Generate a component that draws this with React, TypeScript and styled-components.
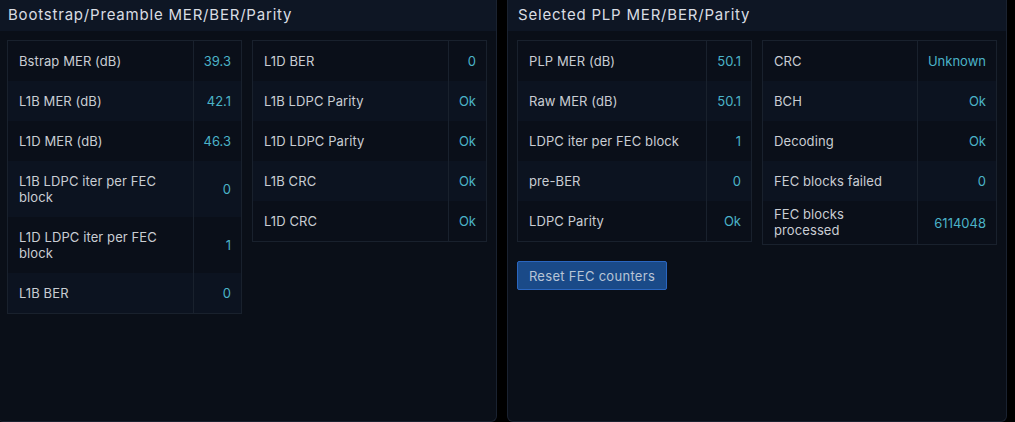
import React from "react";
import styled, { createGlobalStyle } from "styled-components";

const Global = createGlobalStyle`
  html, body { margin: 0; padding: 0; background: #000; }
  body { font-family: Inter, "Noto Sans", sans-serif; overflow: hidden; }
`;

const Page = styled.div`
  display: grid;
  grid-template-columns: 500px 500px;
  gap: 10px;
  margin-left: -3px;
  height: 422px;
`;

const Panel = styled.section`
  box-sizing: border-box;
  height: 422px;
  background: #0a0f18;
  border: 1px solid #1a2230;
  border-top: none;
  border-radius: 0 0 6px 6px;
  display: flex;
  flex-direction: column;
`;

const Header = styled.div`
  box-sizing: border-box;
  height: 31px;
  background: #0e1624;
  padding: 0 10px;
  display: flex;
  align-items: center;
  color: #d9dde3;
  font-size: 15px;
  letter-spacing: 0.8px;
  padding-bottom: 3px;
`;

const Body = styled.div`
  padding: 9px 9px;
  display: flex;
  flex-direction: column;
  gap: 16px;
`;

const Tables = styled.div`
  display: grid;
  grid-template-columns: 235px 235px;
  gap: 10px;
  align-items: start;
`;

const Table = styled.table`
  width: 235px;
  border-collapse: collapse;
  border: 1px solid #19212d;
  font-size: 13px;
  line-height: 16px;
`;

const Row = styled.tr<{ $odd: boolean }>`
  background: ${(p) => (p.$odd ? "#0c1320" : "#0a0f19")};
`;

const Label = styled.td<{ $tight?: boolean }>`
  color: #c9cdd3;
  padding: ${(p) => (p.$tight ? "5px 11px 6px" : "12px 11px")};
  border-right: 1px solid #19212d;
  text-align: left;
  vertical-align: middle;
  letter-spacing: 0.1px;
`;

const Value = styled.td`
  color: #4bb3c8;
  padding: 12px 10px 12px 10px;
  text-align: right;
  white-space: nowrap;
  width: 1%;
  vertical-align: middle;
`;

const Button = styled.button`
  align-self: flex-start;
  width: 150px;
  height: 29px;
  box-sizing: border-box;
  background: #1a4a88;
  border: 1px solid #2a66c0;
  border-radius: 2px;
  color: #b8c5d6;
  font-family: Inter, "Noto Sans", sans-serif;
  font-size: 13px;
  letter-spacing: 0.3px;
  white-space: nowrap;
  padding: 0;
  cursor: pointer;
`;

type Item = [string, string, boolean?];

const StatTable = ({ items }: { items: Item[] }) => (
  <Table>
    <tbody>
      {items.map(([l, v, tight], i) => (
        <Row key={l} $odd={i % 2 === 1}>
          <Label $tight={tight}>{l}</Label>
          <Value>{v}</Value>
        </Row>
      ))}
    </tbody>
  </Table>
);

export default function App() {
  return (
    <>
      <Global />
      <Page>
        <Panel>
          <Header>Bootstrap/Preamble MER/BER/Parity</Header>
          <Body>
            <Tables>
              <StatTable
                items={[
                  ["Bstrap MER (dB)", "39.3"],
                  ["L1B MER (dB)", "42.1"],
                  ["L1D MER (dB)", "46.3"],
                  ["L1B LDPC iter per FEC block", "0"],
                  ["L1D LDPC iter per FEC block", "1"],
                  ["L1B BER", "0"],
                ]}
              />
              <StatTable
                items={[
                  ["L1D BER", "0"],
                  ["L1B LDPC Parity", "Ok"],
                  ["L1D LDPC Parity", "Ok"],
                  ["L1B CRC", "Ok"],
                  ["L1D CRC", "Ok"],
                ]}
              />
            </Tables>
          </Body>
        </Panel>
        <Panel>
          <Header>Selected PLP MER/BER/Parity</Header>
          <Body>
            <Tables>
              <StatTable
                items={[
                  ["PLP MER (dB)", "50.1"],
                  ["Raw MER (dB)", "50.1"],
                  ["LDPC iter per FEC block", "1"],
                  ["pre-BER", "0"],
                  ["LDPC Parity", "Ok"],
                ]}
              />
              <StatTable
                items={[
                  ["CRC", "Unknown"],
                  ["BCH", "Ok"],
                  ["Decoding", "Ok"],
                  ["FEC blocks failed", "0"],
                  ["FEC blocks processed", "6114048", true],
                ]}
              />
            </Tables>
            <Button>Reset FEC counters</Button>
          </Body>
        </Panel>
      </Page>
    </>
  );
}
